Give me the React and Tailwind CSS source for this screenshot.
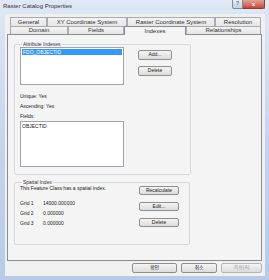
import React from "react";

const row1 = [
  { label: "General", w: "w-[37px]" },
  { label: "XY Coordinate System", w: "w-[80px]" },
  { label: "Raster Coordinate System", w: "w-[88px]" },
  { label: "Resolution", w: "w-[46px]" },
];

const row2 = [
  { label: "Domain", w: "w-[58px]" },
  { label: "Fields", w: "w-[56px]" },
  { label: "Indexes", w: "w-[62px]", active: true },
  { label: "Relationships", w: "w-[75px]" },
];

const Tab = ({ label, w, active }) => (
  <div
    className={
      active
        ? `${w} relative z-10 -mb-px flex items-center justify-center border-x border-t border-[#898c95] bg-[#f4f4f4] text-[6px] text-[#333]`
        : `${w} flex items-center justify-center border-x border-t border-[#a9abb1] bg-gradient-to-b from-[#f3f3f3] to-[#e6e6e6] text-[6px] text-[#333]`
    }
  >
    {label}
  </div>
);

const Btn = ({ children, className = "" }) => (
  <div
    className={`flex items-center justify-center rounded-[2px] border border-[#8e8f8f] bg-gradient-to-b from-[#f4f4f4] to-[#dcdcdc] text-[5px] ${className}`}
  >
    {children}
  </div>
);

const Group = ({ title, className = "", children }) => (
  <fieldset
    className={`rounded-[2px] border border-[#d5d9dc] px-[5px] ${className}`}
  >
    <legend className="ml-[2px] px-[1px] text-[5px] leading-[6px] text-[#333]">
      {title}
    </legend>
    {children}
  </fieldset>
);

export default function App() {
  return (
    <div className="flex h-[280px] w-[269px] flex-col bg-gradient-to-b from-[#dfe8f4] via-[#c4d6ee] to-[#b5cbe8] font-['Liberation_Sans','Noto_Sans_CJK_KR',sans-serif]">
      {/* title bar */}
      <div className="flex h-[14px] shrink-0 items-start justify-between pl-[3px] pr-[4px]">
        <span className="mt-[3px] text-[6px] leading-[7px] text-[#333]">
          Raster Catalog Properties
        </span>
        <div className="flex">
          <div className="flex h-[9px] w-[11px] items-center justify-center rounded-bl-[2px] border border-t-0 border-[#7a8ca5] bg-gradient-to-b from-[#e6edf6] to-[#c3d2e6] text-[5px] font-bold text-[#5a6b82]">
            ?
          </div>
          <div className="flex h-[9px] w-[22px] items-center justify-center rounded-br-[2px] border border-l-0 border-t-0 border-[#8a3a3a] bg-gradient-to-b from-[#e4a294] to-[#c74337] text-[6px] font-bold text-white">
            x
          </div>
        </div>
      </div>

      {/* client */}
      <div className="mb-[4px] ml-[5px] mr-[4px] flex flex-1 flex-col bg-[#f0f0f0] pl-[2px] pr-[3px] pt-[3px]">
        <div className="flex h-[9px] pl-[3px]">
          {row1.map((t) => (
            <Tab key={t.label} {...t} />
          ))}
        </div>
        <div className="flex h-[8px] pl-[3px]">
          {row2.map((t) => (
            <Tab key={t.label} {...t} />
          ))}
        </div>

        {/* tab page */}
        <div className="flex h-[227px] flex-col border border-[#898c95] bg-[#f4f4f4] pl-[6px] pt-[6px]">
          <Group title="Attribute Indexes" className="h-[134px] w-[177px]">
            <div className="flex">
              <div className="h-[38px] w-[104px] border border-[#a0a4aa] bg-white p-px">
                <div className="h-[6px] bg-[#3399ff] pl-[1px] text-[5px] leading-[6px] text-white">
                  FDO_OBJECTID
                </div>
              </div>
              <div className="ml-[14px] mt-[3px] flex flex-col gap-[6px] text-[#222]">
                <Btn className="h-[10px] w-[34px]">Add...</Btn>
                <Btn className="h-[10px] w-[34px]">Delete</Btn>
              </div>
            </div>
            <div className="mt-[8px] flex flex-col gap-[4px] text-[5px] leading-[6px] text-[#222]">
              <span>Unique: Yes</span>
              <span>Ascending: Yes</span>
              <span>Fields:</span>
            </div>
            <div className="mt-[2px] h-[46px] w-[104px] border border-[#a0a4aa] bg-white p-px text-[5px] leading-[6px] text-[#222]">
              OBJECTID
            </div>
          </Group>

          <Group title="Spatial Index" className="mt-[4px] h-[66px] w-[176px]">
            <div className="flex">
              <div className="flex flex-col text-[5px] leading-[6px] text-[#222]">
                <span>This Feature Class has a spatial index.</span>
                <div className="mt-[9px] grid grid-cols-[23px_auto] gap-y-[4px]">
                  <span>Grid 1</span>
                  <span>14000.000000</span>
                  <span>Grid 2</span>
                  <span>0.000000</span>
                  <span>Grid 3</span>
                  <span>0.000000</span>
                </div>
              </div>
              <div className="ml-auto mr-[5px] mt-[1px] flex flex-col gap-[7px] text-[#222]">
                <Btn className="h-[9px] w-[40px]">Recalculate</Btn>
                <Btn className="h-[9px] w-[40px]">Edit...</Btn>
                <Btn className="h-[9px] w-[40px]">Delete</Btn>
              </div>
            </div>
          </Group>
        </div>

        {/* dialog buttons */}
        <div className="mt-[2px] flex h-[10px] pl-[125px] text-[#222]">
          <Btn className="h-[10px] w-[45px] border-[#3c7fb1]">확인</Btn>
          <Btn className="ml-[4px] h-[10px] w-[36px]">취소</Btn>
          <Btn className="ml-[4px] h-[10px] w-[41px] border-[#b5b5b5] text-[#9a9a9a]">
            적용(A)
          </Btn>
        </div>
      </div>
    </div>
  );
}
